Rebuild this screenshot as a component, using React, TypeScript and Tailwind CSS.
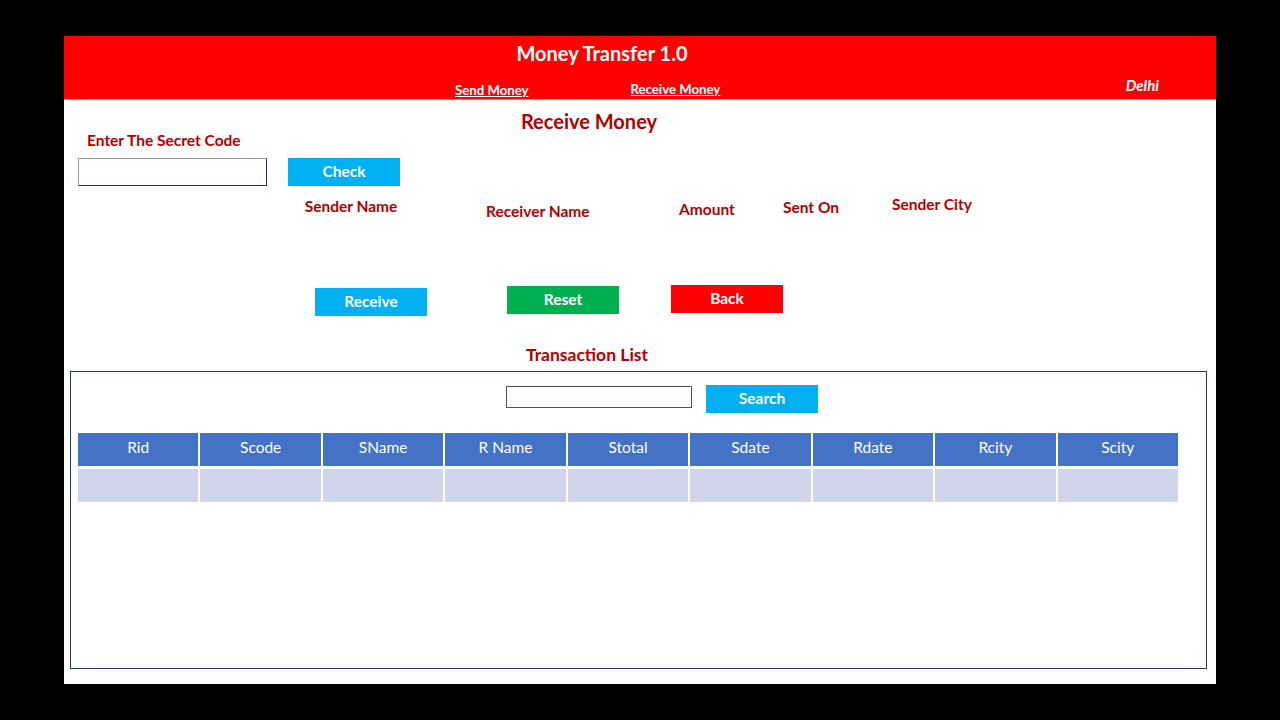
import React from "react";

const FONT = { fontFamily: "Lato, 'Liberation Sans', sans-serif" };

const headers = ["Rid", "Scode", "SName", "R Name", "Stotal", "Sdate", "Rdate", "Rcity", "Scity"];

const Button: React.FC<{ label: string; color: string; className?: string }> = ({
  label,
  color,
  className = "",
}) => (
  <button
    className={`w-[112px] h-[28px] flex items-center justify-center text-white font-bold text-[15.5px] ${color} ${className}`}
  >
    {label}
  </button>
);

const App: React.FC = () => {
  return (
    <div className="w-[1280px] h-[720px] bg-black pt-[36px] pl-[64px]" style={FONT}>
      <div className="w-[1152px] h-[648px] bg-white flex flex-col">
        {/* header */}
        <header className="h-[64px] bg-[#ff0000] border-b border-[#ff7a7a] flex flex-col text-white">
          <div className="mt-[5px] h-[24px] flex justify-center pr-[76px]">
            <h1 className="text-[20px] font-bold leading-[24px] whitespace-nowrap">Money Transfer 1.0</h1>
          </div>
          <div className="mt-[10px] h-[20px] flex items-start">
            <a className="ml-[391px] mt-[7px] text-[13.2px] font-bold underline leading-[16px] whitespace-nowrap">Send Money</a>
            <a className="ml-[102px] mt-[6px] text-[13.2px] font-bold underline leading-[16px] whitespace-nowrap">Receive Money</a>
            <span className="ml-auto mr-[57px] mt-[1px] text-[15px] font-bold italic leading-[18px]">Delhi</span>
          </div>
        </header>

        {/* receive form */}
        <div className="mt-[11px] h-[20px] flex justify-center pr-[102px]">
          <h2 className="text-[20px] font-bold leading-[20px] text-[#b00000] whitespace-nowrap">Receive Money</h2>
        </div>
        <div className="-mt-[3px] h-[18px] pl-[23px]">
          <span className="text-[15.5px] font-bold leading-[18px] text-[#b00000] whitespace-nowrap">Enter The Secret Code</span>
        </div>
        <div className="mt-[12px] flex pl-[14px]">
          <input className="w-[189px] h-[28px] border border-t-[#8c9ab8] border-l-[#8c9ab8] border-b-[#1f2f6f] border-r-[#1f2f6f] outline-none" />
          <Button label="Check" color="bg-[#00b0f0]" className="ml-[21px]" />
        </div>

        <div className="mt-[9px] h-[25px] flex items-start text-[15.5px] font-bold leading-[18px] text-[#b00000]">
          <span className="w-[100px] text-center ml-[237px] mt-[2px] whitespace-nowrap">Sender Name</span>
          <span className="w-[100px] text-center ml-[85px] mt-[7px] whitespace-nowrap">Receiver Name</span>
          <span className="w-[100px] text-center ml-[71px] mt-[5px] whitespace-nowrap">Amount</span>
          <span className="w-[100px] text-center ml-[4px] mt-[3px] whitespace-nowrap">Sent On</span>
          <span className="w-[100px] text-center ml-[21px] mt-0 whitespace-nowrap">Sender City</span>
        </div>

        <div className="mt-[65px] h-[31px] flex items-start">
          <Button label="Receive" color="bg-[#00b0f0]" className="ml-[251px] mt-[3px]" />
          <Button label="Reset" color="bg-[#00b050]" className="ml-[80px] mt-[1px]" />
          <Button label="Back" color="bg-[#ff0000]" className="ml-[52px]" />
        </div>

        <div className="mt-[29px] h-[20px] flex">
          <span className="w-[200px] ml-[423px] text-center text-[17.5px] font-bold leading-[20px] text-[#b00000] whitespace-nowrap">
            Transaction List
          </span>
        </div>

        {/* transaction list */}
        <div className="mt-[6px] ml-[6px] w-[1137px] h-[298px] border border-[#1f3864]">
          <div className="mt-[13px] flex items-start">
            <input className="ml-[435px] mt-[1px] w-[186px] h-[22px] border border-[#44546a] outline-none" />
            <Button label="Search" color="bg-[#00b0f0]" className="ml-[14px]" />
          </div>
          <div className="mt-[20px] ml-[7px] w-[1100px] flex flex-col gap-[3px]">
            <div className="grid grid-cols-9 gap-[2px] bg-white">
              {headers.map((h) => (
                <div
                  key={h}
                  className="h-[33px] pb-[3px] bg-[#4472c4] text-white text-[15.5px] flex items-center justify-center"
                >
                  {h}
                </div>
              ))}
            </div>
            <div className="grid grid-cols-9 gap-[2px] bg-white">
              {headers.map((h) => (
                <div key={h} className="h-[33px] bg-[#cfd5ea]" />
              ))}
            </div>
          </div>
        </div>
      </div>
    </div>
  );
};

export default App;
